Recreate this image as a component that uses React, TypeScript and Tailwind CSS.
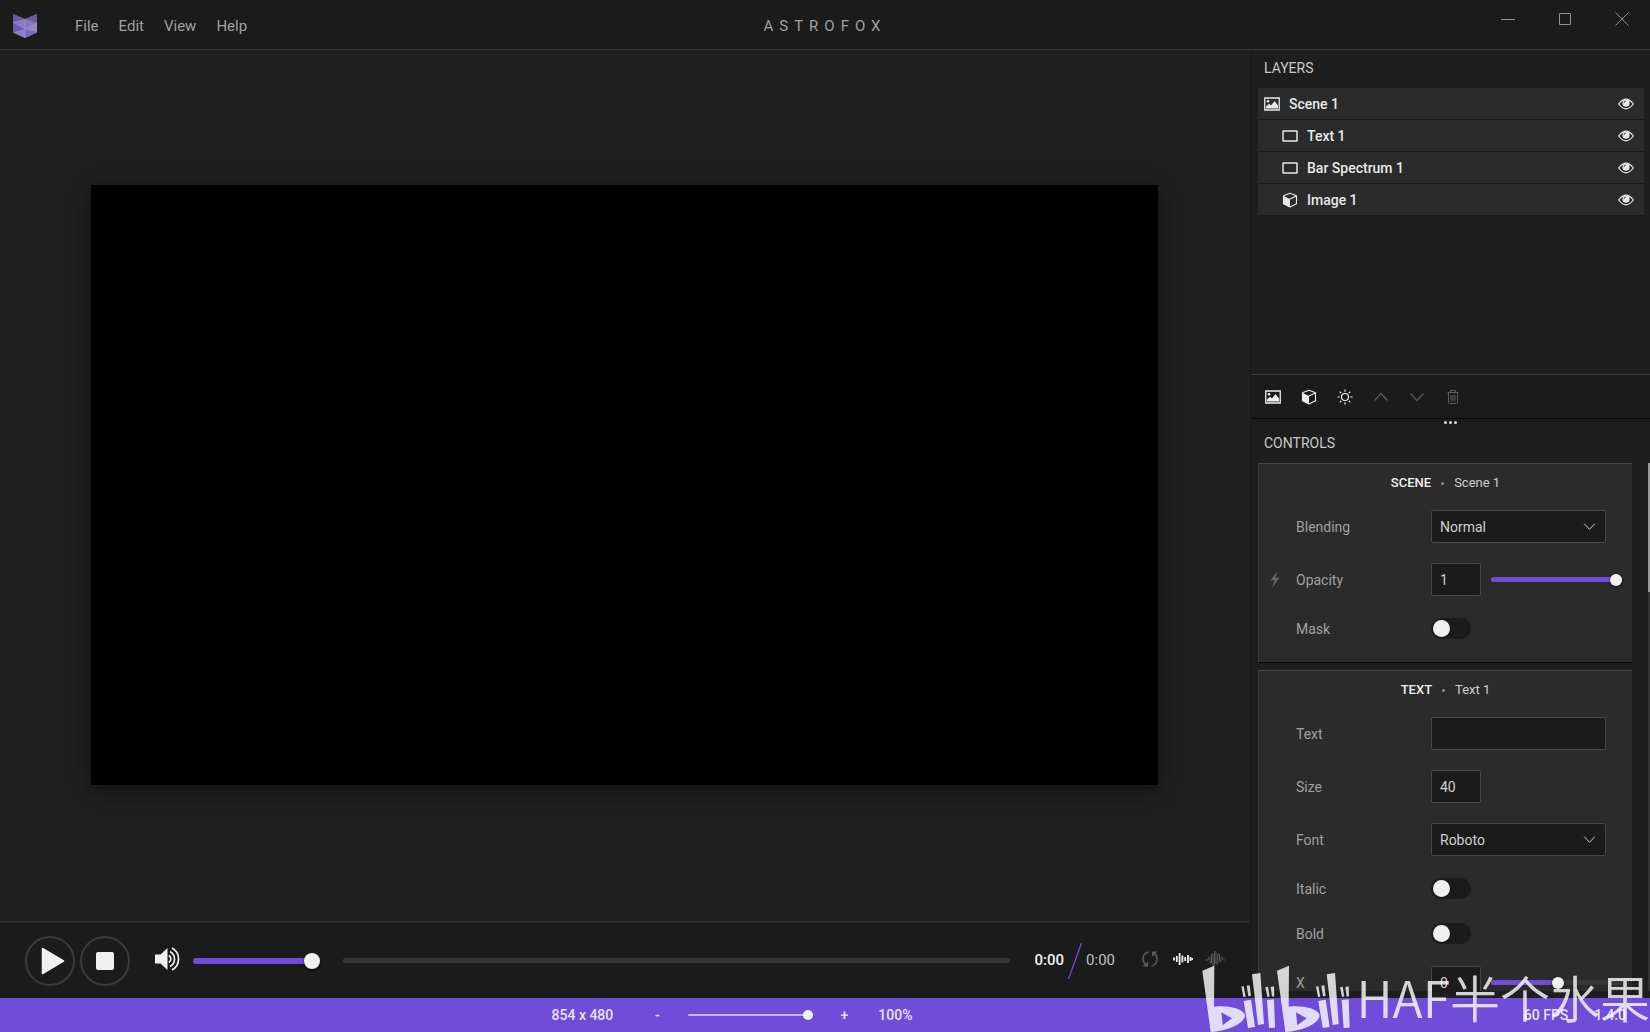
import { useState, type CSSProperties, type ReactNode } from "react";

type IconProps = { className?: string };

function Logo() {
  return (
    <svg viewBox="0 0 24 24" className="h-6 w-6" aria-hidden="true">
      <path d="M0 0 12 5 24 0V18.500L12 24 0 18.500Z" fill="#7b68b8" />
      <path d="M0 0 12 5 0 8Z" fill="#6a58a6" />
      <path d="M0 8 12 5V15Z" fill="#8c7bc4" />
      <path d="M0 8 12 15 0 18.500Z" fill="#6f58b6" />
      <path d="M0 18.500 12 15V24Z" fill="#8e7ecb" />
      <path d="M24 0 12 5 24 9Z" fill="#6c5a9f" />
      <path d="M24 9 12 5V15Z" fill="#8978b6" />
      <path d="M24 9 12 15 24 18.500Z" fill="#9584cb" />
      <path d="M24 18.500 12 15V24Z" fill="#7e6abf" />
      <path d="M12 5V24M0 8 12 15 24 9" stroke="#a79bd6" strokeWidth=".5" fill="none" />
    </svg>
  );
}

function ImageIcon({ className = "" }: IconProps) {
  return (
    <svg viewBox="0 0 16 14" className={`h-[14px] w-4 ${className}`} aria-hidden="true">
      <path d="M.75 1H15.250V13H.75Z" fill="none" stroke="currentColor" strokeWidth="1.300" />
      <circle cx="4" cy="4.200" r="1.300" fill="currentColor" />
      <path d="M2 11.500V9.500L5 6.800 7 8.500 10.500 4 14 8.500V11.500Z" fill="currentColor" />
    </svg>
  );
}

function RectIcon() {
  return (
    <svg viewBox="0 0 16 12" className="h-3 w-4" aria-hidden="true">
      <rect x="1" y="1" width="14" height="10" rx=".5" fill="none" stroke="currentColor" strokeWidth="1.500" />
    </svg>
  );
}

function CubeIcon() {
  return (
    <svg viewBox="0 0 16 16" className="h-4 w-4" aria-hidden="true">
      <path d="M8 1.300 14.500 3.800V11.700L8 15 1.500 11.700V3.800Z" fill="none" stroke="currentColor" strokeWidth="1.100" strokeLinejoin="round" />
      <path d="M1.500 4 8 7V15L1.500 11.700Z" fill="currentColor" />
      <path d="M8 7 14.500 4" stroke="currentColor" strokeWidth="1.100" />
    </svg>
  );
}

function SunIcon() {
  return (
    <svg viewBox="0 0 16 16" className="h-4 w-4" fill="none" stroke="currentColor" strokeWidth="1.200" aria-hidden="true">
      <circle cx="8" cy="8" r="3.500" />
      <path d="M8 .5V2.700M8 13.300V15.500M.5 8H2.700M13.300 8H15.500M2.700 2.700 4.200 4.200M11.800 11.800 13.300 13.300M2.700 13.300 4.200 11.800M11.800 4.200 13.300 2.700" />
    </svg>
  );
}

function ChevronIcon({ className = "" }: IconProps) {
  return (
    <svg viewBox="0 0 16 16" className={className} fill="none" stroke="currentColor" strokeWidth="1.200" aria-hidden="true">
      <path d="M1.500 4.500 8 11.500 14.500 4.500" />
    </svg>
  );
}

function TrashIcon() {
  return (
    <svg viewBox="0 0 16 16" className="h-4 w-4" fill="none" stroke="currentColor" aria-hidden="true">
      <path d="M2.500 3.500H13.500M5.500 3.500V1.500H10.500V3.500M3.500 3.500V13.500Q3.500 14.500 4.500 14.500H11.500Q12.500 14.500 12.500 13.500V3.500M6 6V12.500M8 6V12.500M10 6V12.500" />
    </svg>
  );
}

function EyeIcon() {
  return (
    <svg viewBox="0 0 16 12" className="h-3 w-4" aria-hidden="true">
      <path d="M.7 6Q8-3.700 15.300 6 8 15.700.7 6Z" fill="none" stroke="currentColor" strokeWidth="1.200" />
      <circle cx="8" cy="5.200" r="3.600" fill="currentColor" />
      <path d="M5.900 5A2.200 2.200 0 0 1 7.900 3" fill="none" stroke="#2b2b2b" strokeWidth=".9" />
    </svg>
  );
}

function BoltIcon() {
  return (
    <svg viewBox="0 0 10 17" className="h-[17px] w-[10px] text-[#666]" aria-hidden="true">
      <path d="M7.500 0 .5 9.500 4.500 9 2 17 9.500 6.500 5.500 7Z" fill="currentColor" />
    </svg>
  );
}

function SpeakerIcon() {
  return (
    <svg viewBox="0 0 26 24" className="h-6 w-[26px]" aria-hidden="true">
      <path d="M0 7.500H5.500L12.500 1V23L5.500 16.500H0Z" fill="currentColor" />
      <g fill="none" stroke="currentColor" strokeWidth="1.700">
        <path d="M13.800 8.500A4 4 0 0 1 13.800 15.500" />
        <path d="M15 4.500A8.500 8.500 0 0 1 15 19.500" />
        <path d="M17 1A12.500 12.500 0 0 1 17 23" />
      </g>
    </svg>
  );
}

function LoopIcon() {
  return (
    <svg viewBox="0 0 16 16" className="h-4 w-4" aria-hidden="true">
      <path d="M6.500 1Q1 2.500 1 8 1 11.500 4.200 13.800M9.500 15Q15 13.500 15 8 15 4.500 11.800 2.200" fill="none" stroke="currentColor" strokeWidth="1.500" />
      <path d="M.5 15.500H6V10.300ZM15.500 .5H10V5.700Z" fill="currentColor" />
    </svg>
  );
}

function WaveformIcon() {
  return (
    <svg viewBox="0 0 20 14" className="h-[14px] w-5" stroke="currentColor" strokeWidth="1.800" aria-hidden="true">
      <path d="M1 5.500V8.500M3.800 4V10M6.600 1V13M9.400 3.500V10.500M12.200 5V9M15 3V11M17.500 5V9M19.400 6V8" />
    </svg>
  );
}

function SpectrumIcon() {
  return (
    <svg viewBox="0 0 20 16" className="h-4 w-5" fill="none" stroke="currentColor" strokeWidth="1" strokeLinejoin="round" aria-hidden="true">
      <path d="M0 9H2.500Q3.500 9 3.500 7.500 3.500 6 4.300 6 5 6 5 7.500V11Q5 12.500 5.800 12.500 6.500 12.500 6.500 11V4Q6.500 3 7.300 3 8 3 8 4V14Q8 15 8.800 15 9.500 15 9.500 14V1.500Q9.500 .5 10.300 .5 11 .5 11 1.500V12Q11 13 11.900 13 12.800 13 12.800 12V4Q12.800 3 13.700 3 14.500 3 14.500 4V9.500Q14.500 11 15.300 11 16 11 16 9.500V7.500Q16 6 16.800 6 17.500 6 17.500 7.500 17.500 9 18.500 9H20" />
    </svg>
  );
}

function BilibiliLogo() {
  return (
    <svg viewBox="0 0 447 201" className="h-[67px] w-[149px] shrink-0" fill="currentColor" role="img" aria-label="bilibili">
      <defs>
        <g id="half-mark">
          <path
            fillRule="evenodd"
            d="M1 17 37 2 36 125C70 120 120 128 128 148 134 168 92 196 26 201ZM58 142 62 181 90 160Z"
          />
          <path d="M118 65 125 63 131 95 124 96ZM134 62 143 61 147 93 139 94ZM125 108 147 104 159 186 138 189ZM150 28 175 24 186 177 168 180ZM190 67 198 65 203 94 196 96ZM206 66 216 64 217 94 210 95ZM195 105 216 103 219 188 201 189Z" />
        </g>
      </defs>
      <use href="#half-mark" />
      <use href="#half-mark" x="224" />
    </svg>
  );
}

type SliderProps = {
  label: string;
  initial: number;
  className: string;
  fill?: string;
  track?: string;
};

function Slider({ label, initial, className, fill = "#704dd8", track = "#363636" }: SliderProps) {
  const [value, setValue] = useState(initial);
  const style: CSSProperties = {
    background: `linear-gradient(to right, ${fill} ${value}%, ${track} ${value}%)`,
  };
  return (
    <input
      type="range"
      aria-label={label}
      value={value}
      onChange={(e) => setValue(Number(e.target.value))}
      style={style}
      className={`min-w-0 appearance-none rounded-full [&::-webkit-slider-thumb]:appearance-none [&::-webkit-slider-thumb]:rounded-full [&::-webkit-slider-thumb]:bg-[#f0f0f0] ${className}`}
    />
  );
}

const smallThumb =
  "h-[5px] [&::-webkit-slider-thumb]:h-3 [&::-webkit-slider-thumb]:w-3 [&::-webkit-slider-thumb]:shadow-[0_1px_3px_rgba(0,0,0,0.8)]";

function Row({ label, id, children, icon, short }: { label: string; id: string; children: ReactNode; icon?: ReactNode; short?: boolean }) {
  return (
    <div className={`flex shrink-0 items-center ${short ? "h-[45px]" : "h-[53px]"}`}>
      <div className="flex w-[37px] shrink-0 pl-[11px]">{icon}</div>
      <label htmlFor={id} className="w-[135px] shrink-0 text-[#a0a0a0]">
        {label}
      </label>
      {children}
    </div>
  );
}

const fieldClass = "h-[33px] rounded-xs border border-[#484848] bg-[#1b1b1b] px-2 text-[#d0d0d0] outline-none";

function SelectField({ id, options }: { id: string; options: string[] }) {
  return (
    <div className="relative w-[175px]">
      <select id={id} className={`${fieldClass} w-full appearance-none`}>
        {options.map((o) => (
          <option key={o}>{o}</option>
        ))}
      </select>
      <ChevronIcon className="pointer-events-none absolute top-2.5 right-2.5 h-[13px] w-[13px] text-[#d0d0d0]" />
    </div>
  );
}

function Toggle({ id }: { id: string }) {
  return (
    <span className="relative flex h-[21px] w-10">
      <input id={id} type="checkbox" role="switch" className="peer h-full w-full appearance-none rounded-full bg-[#1b1b1b] checked:bg-[#704dd8]" />
      <span className="pointer-events-none absolute top-0.5 left-0.5 h-[17px] w-[17px] rounded-full bg-[#f0f0f0] peer-checked:left-[21px]" />
    </span>
  );
}

function Card({ type, name, children }: { type: string; name: string; children: ReactNode }) {
  return (
    <section className="shrink-0 border-t border-b border-l border-t-[#474747] border-b-[#0b0b0b] border-l-[#383838] bg-[#2b2b2b]">
      <h3 className="flex h-9 items-center justify-center pt-0.5 text-[13px]">
        <span className="font-medium text-[#f0f0f0]">{type}</span>
        <span className="mx-2.5 h-[3px] w-[3px] rounded-full bg-[#909090]" />
        <span className="text-[#cfcfcf]">{name}</span>
      </h3>
      {children}
    </section>
  );
}

const layers = [
  { name: "Scene 1", icon: <ImageIcon />, child: false },
  { name: "Text 1", icon: <RectIcon />, child: true },
  { name: "Bar Spectrum 1", icon: <RectIcon />, child: true },
  { name: "Image 1", icon: <CubeIcon />, child: true },
];

function LayersPanel() {
  return (
    <section className="flex h-[369px] shrink-0 flex-col border-b border-[#0b0b0b]">
      <h2 className="flex h-[38px] shrink-0 items-center px-[13px] pb-0.5 text-[#c8c8c8]">LAYERS</h2>
      <ul className="min-h-0 flex-1 pr-1.5 pl-[7px]">
        {layers.map((l) => (
          <li
            key={l.name}
            className={`flex h-8 items-center border-b border-[#1a1a1a] bg-[#2b2b2b] pr-2.5 font-medium text-[#e8e8e8] ${l.child ? "pl-6" : "pl-1.5"}`}
          >
            {l.icon}
            <span className="ml-[9px] flex-1">{l.name}</span>
            <button aria-label={`Toggle ${l.name}`}>
              <EyeIcon />
            </button>
          </li>
        ))}
      </ul>
      <div className="flex h-11 shrink-0 items-center gap-5 border-t border-[#383838] bg-[#1b1b1b] pl-3.5 text-[#f0f0f0]">
        <button aria-label="Add scene"><ImageIcon /></button>
        <button aria-label="Add display"><CubeIcon /></button>
        <button aria-label="Add effect"><SunIcon /></button>
        <button aria-label="Move up" className="text-[#5c5c5c]"><ChevronIcon className="h-4 w-4 rotate-180" /></button>
        <button aria-label="Move down" className="text-[#5c5c5c]"><ChevronIcon className="h-4 w-4" /></button>
        <button aria-label="Delete" className="text-[#5c5c5c]"><TrashIcon /></button>
      </div>
    </section>
  );
}

function ControlsPanel() {
  return (
    <section className="flex min-h-0 flex-1 flex-col pb-[7px]">
      <div className="flex h-1.5 shrink-0 items-center justify-center gap-0.5 bg-[#1b1b1b]">
        <span className="h-[3px] w-[3px] rounded-full bg-[#d8d8d8]" />
        <span className="h-[3px] w-[3px] rounded-full bg-[#d8d8d8]" />
        <span className="h-[3px] w-[3px] rounded-full bg-[#d8d8d8]" />
      </div>
      <h2 className="flex h-[38px] shrink-0 items-center px-[13px] pb-0.5 text-[#c8c8c8]">CONTROLS</h2>
      <div className="flex min-h-0 flex-1">
        <div className="flex flex-1 flex-col gap-[7px] overflow-hidden pr-4 pl-[7px]">
          <Card type="SCENE" name="Scene 1">
            <Row label="Blending" id="blending">
              <SelectField id="blending" options={["Normal", "Multiply", "Screen"]} />
            </Row>
            <Row label="Opacity" id="opacity" icon={<BoltIcon />}>
              <input id="opacity" defaultValue="1" className={`${fieldClass} w-[50px]`} />
              <Slider label="Opacity amount" initial={100} className={`ml-2.5 w-[131px] ${smallThumb}`} />
            </Row>
            <Row label="Mask" id="mask" short>
              <Toggle id="mask" />
            </Row>
            <div className="h-[11px]" />
          </Card>
          <Card type="TEXT" name="Text 1">
            <Row label="Text" id="text">
              <input id="text" className={`${fieldClass} w-[175px]`} />
            </Row>
            <Row label="Size" id="size">
              <input id="size" defaultValue="40" className={`${fieldClass} w-[50px]`} />
            </Row>
            <Row label="Font" id="font">
              <SelectField id="font" options={["Roboto", "Lato", "Open Sans"]} />
            </Row>
            <Row label="Italic" id="italic" short>
              <Toggle id="italic" />
            </Row>
            <Row label="Bold" id="bold" short>
              <Toggle id="bold" />
            </Row>
            <Row label="X" id="pos-x">
              <input id="pos-x" defaultValue="0" className={`${fieldClass} w-[50px]`} />
              <Slider label="X position" initial={51} className={`ml-2.5 w-[131px] ${smallThumb}`} />
            </Row>
          </Card>
        </div>
        <div className="w-0.5 bg-[#333]">
          <div className="h-[129px] bg-[#999]" />
        </div>
      </div>
    </section>
  );
}

function Player() {
  return (
    <div className="flex h-[77px] shrink-0 items-center border-t-2 border-[#2c2c2c] bg-[#1b1b1b] pr-[25px] pl-[25px] text-[#f0f0f0]">
      <button aria-label="Play" className="flex h-[50px] w-[50px] items-center justify-center rounded-full border-2 border-[#3a3a3a]">
        <svg viewBox="0 0 24 28" className="ml-1.5 h-7 w-6" aria-hidden="true">
          <path d="M1.500 1.500 22.500 14 1.500 26.500Z" fill="currentColor" stroke="currentColor" strokeWidth="1.500" strokeLinejoin="round" />
        </svg>
      </button>
      <button aria-label="Stop" className="ml-[5px] flex h-[50px] w-[50px] items-center justify-center rounded-full border-2 border-[#3a3a3a]">
        <span className="h-[18px] w-[18px] rounded-xs bg-current" />
      </button>
      <button aria-label="Mute" className="mb-1 ml-[25px]">
        <SpeakerIcon />
      </button>
      <Slider
        label="Volume"
        initial={100}
        className="ml-3 h-1.5 w-[127px] [&::-webkit-slider-thumb]:h-4 [&::-webkit-slider-thumb]:w-4 [&::-webkit-slider-thumb]:shadow-[0_1px_3px_rgba(0,0,0,0.8)]"
      />
      <Slider label="Position" initial={0} className="ml-[23px] h-[5px] flex-1 [&::-webkit-slider-thumb]:opacity-0" />
      <div className="ml-[25px] flex items-center text-[15px]">
        <span className="font-medium">0:00</span>
        <svg viewBox="0 0 14 36" className="mx-1 h-9 w-3.5" aria-hidden="true">
          <path d="M.5 36 13.500 0" stroke="#704dd8" strokeWidth="1.300" />
        </svg>
        <span className="text-[#c0c0c0]">0:00</span>
      </div>
      <div className="mb-1 ml-[27px] flex items-center">
        <button aria-label="Repeat" className="text-[#5c5c5c]"><LoopIcon /></button>
        <button aria-label="Waveform" className="ml-[15px]"><WaveformIcon /></button>
        <button aria-label="Spectrum" className="ml-3 text-[#5c5c5c]"><SpectrumIcon /></button>
      </div>
    </div>
  );
}

export default function App() {
  return (
    <div className="relative flex h-screen flex-col overflow-hidden bg-[#1e1e1e] font-[Roboto,sans-serif] text-sm">
      <header className="grid h-[50px] shrink-0 grid-cols-[1fr_auto_1fr] items-center border-b border-[#383838] bg-[#1b1b1b] text-[15px] text-[#a0a0a0]">
        <div className="flex items-center pt-0.5 pl-[13px]">
          <Logo />
          <nav className="ml-[38px] flex gap-5 pt-0.5">
            <button>File</button>
            <button>Edit</button>
            <button>View</button>
            <button>Help</button>
          </nav>
        </div>
        <h1 className="pt-1 tracking-[6px]">ASTROFOX</h1>
        <div className="flex justify-end self-start text-[#909090]">
          <button aria-label="Minimize" className="flex h-[38px] w-[57px] items-center justify-center">
            <svg viewBox="0 0 14 14" className="h-3.5 w-3.5" stroke="currentColor" aria-hidden="true"><path d="M0 7.500H14" /></svg>
          </button>
          <button aria-label="Maximize" className="flex h-[38px] w-[57px] items-center justify-center">
            <svg viewBox="0 0 14 14" className="h-3.5 w-3.5" fill="none" stroke="currentColor" aria-hidden="true"><path d="M1.500 1.500H12.500V12.500H1.500Z" /></svg>
          </button>
          <button aria-label="Close" className="flex h-[38px] w-[57px] items-center justify-center">
            <svg viewBox="0 0 14 14" className="h-3.5 w-3.5" stroke="currentColor" aria-hidden="true"><path d="M.5 .5 13.500 13.500M13.500 .5 .5 13.500" /></svg>
          </button>
        </div>
      </header>

      <div className="flex min-h-0 flex-1">
        <main className="flex min-w-0 flex-1 flex-col">
          <div className="flex min-h-0 flex-1 items-center justify-center bg-[#202020] pr-px pb-px">
            <div className="h-[600px] w-[1067px] bg-black shadow-[0_5px_20px_rgba(0,0,0,0.5)]" />
          </div>
          <Player />
        </main>
        <aside className="flex w-[400px] shrink-0 flex-col border-l border-[#191919] bg-[#1e1e1e]">
          <LayersPanel />
          <ControlsPanel />
        </aside>
      </div>

      <footer className="flex h-[34px] shrink-0 items-center bg-[#704dd8] font-medium text-[#e8e2fa]">
        <div className="flex flex-1 items-center justify-center">
          <span>854 x 480</span>
          <button aria-label="Zoom out" className="ml-10 w-2">-</button>
          <Slider
            label="Zoom"
            initial={100}
            fill="#c6b8ef"
            track="#c6b8ef"
            className="ml-[27px] h-0.5 w-[125px] [&::-webkit-slider-thumb]:h-2.5 [&::-webkit-slider-thumb]:w-2.5"
          />
          <button aria-label="Zoom in" className="ml-[27px] w-2">+</button>
          <span className="ml-[30px]">100%</span>
        </div>
        <div className="flex w-[186px] justify-end gap-[26px] pr-6">
          <span>60 FPS</span>
          <span>1.4.0</span>
        </div>
      </footer>

      <div className="pointer-events-none absolute right-0 bottom-0 flex items-end text-white/80">
        <BilibiliLogo />
        <span className="ml-1.5 font-['Noto_Sans_CJK_SC',sans-serif] text-[50px] leading-[72px] font-[350] whitespace-nowrap">HAF半个水果</span>
      </div>
    </div>
  );
}
